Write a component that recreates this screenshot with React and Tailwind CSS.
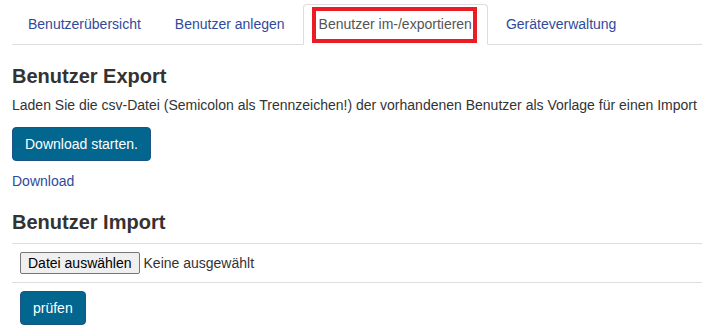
function Tab({ label, active }) {
  if (active) {
    return (
      <li className="relative mr-[2px] -mb-px">
        <a className="block px-[15px] pt-[9px] pb-[10px] border border-[#ddd] border-b-white bg-white rounded-t-[4px] text-[#555] cursor-default">
          {label}
        </a>
        {/* annotation box */}
        <span className="absolute left-[9px] top-[3px] w-[165px] h-[36px] border-4 border-[#ec1c24] pointer-events-none" />
      </li>
    )
  }
  return (
    <li className="mr-[2px] -mb-px">
      <a href="#" className="block px-[15px] pt-[9px] pb-[10px] border border-transparent text-[#2f4a9c]">
        {label}
      </a>
    </li>
  )
}

export default function App() {
  const tabs = ["Benutzerübersicht", "Benutzer anlegen", "Benutzer im-/exportieren", "Geräteverwaltung"]

  return (
    <div className="min-h-screen bg-white pl-[12px] font-['Liberation_Sans',Arial,sans-serif] text-[14px] leading-[20px] text-[#333]">
      {/* Tabs */}
      <ul className="flex pt-[4px] border-b border-[#ddd]">
        {tabs.map((t, i) => (
          <Tab key={t} label={t} active={i === 2} />
        ))}
      </ul>

      {/* Export */}
      <h3 className="mt-[20px] mb-[8px] text-[20px] leading-[22px] font-bold">Benutzer Export</h3>
      <p className="whitespace-nowrap">
        Laden Sie die csv-Datei (Semicolon als Trennzeichen!) der vorhandenen Benutzer als Vorlage für einen Import
      </p>
      <button className="mt-[12px] h-[34px] px-[12px] border border-[#1d5486] rounded-[4px] bg-[#03668e] text-white">
        Download starten.
      </button>
      <a href="#" className="block w-fit mt-[10px] text-[#2f4a9c]">Download</a>

      {/* Import */}
      <h3 className="mt-[20px] mb-[10px] text-[20px] leading-[22px] font-bold">Benutzer Import</h3>
      <div>
        <div className="border-t border-[#ddd] p-[8px] flex items-center">
          <button className="h-[22px] px-[7px] border border-[#767676] rounded-[2px] bg-[#efefef] text-black leading-none">
            Datei auswählen
          </button>
          <span className="ml-[4px]">Keine ausgewählt</span>
        </div>
        <div className="border-t border-[#ddd] p-[8px]">
          <button className="h-[34px] px-[12px] border border-[#1d5486] rounded-[4px] bg-[#03668e] text-white">
            prüfen
          </button>
        </div>
      </div>
    </div>
  )
}
